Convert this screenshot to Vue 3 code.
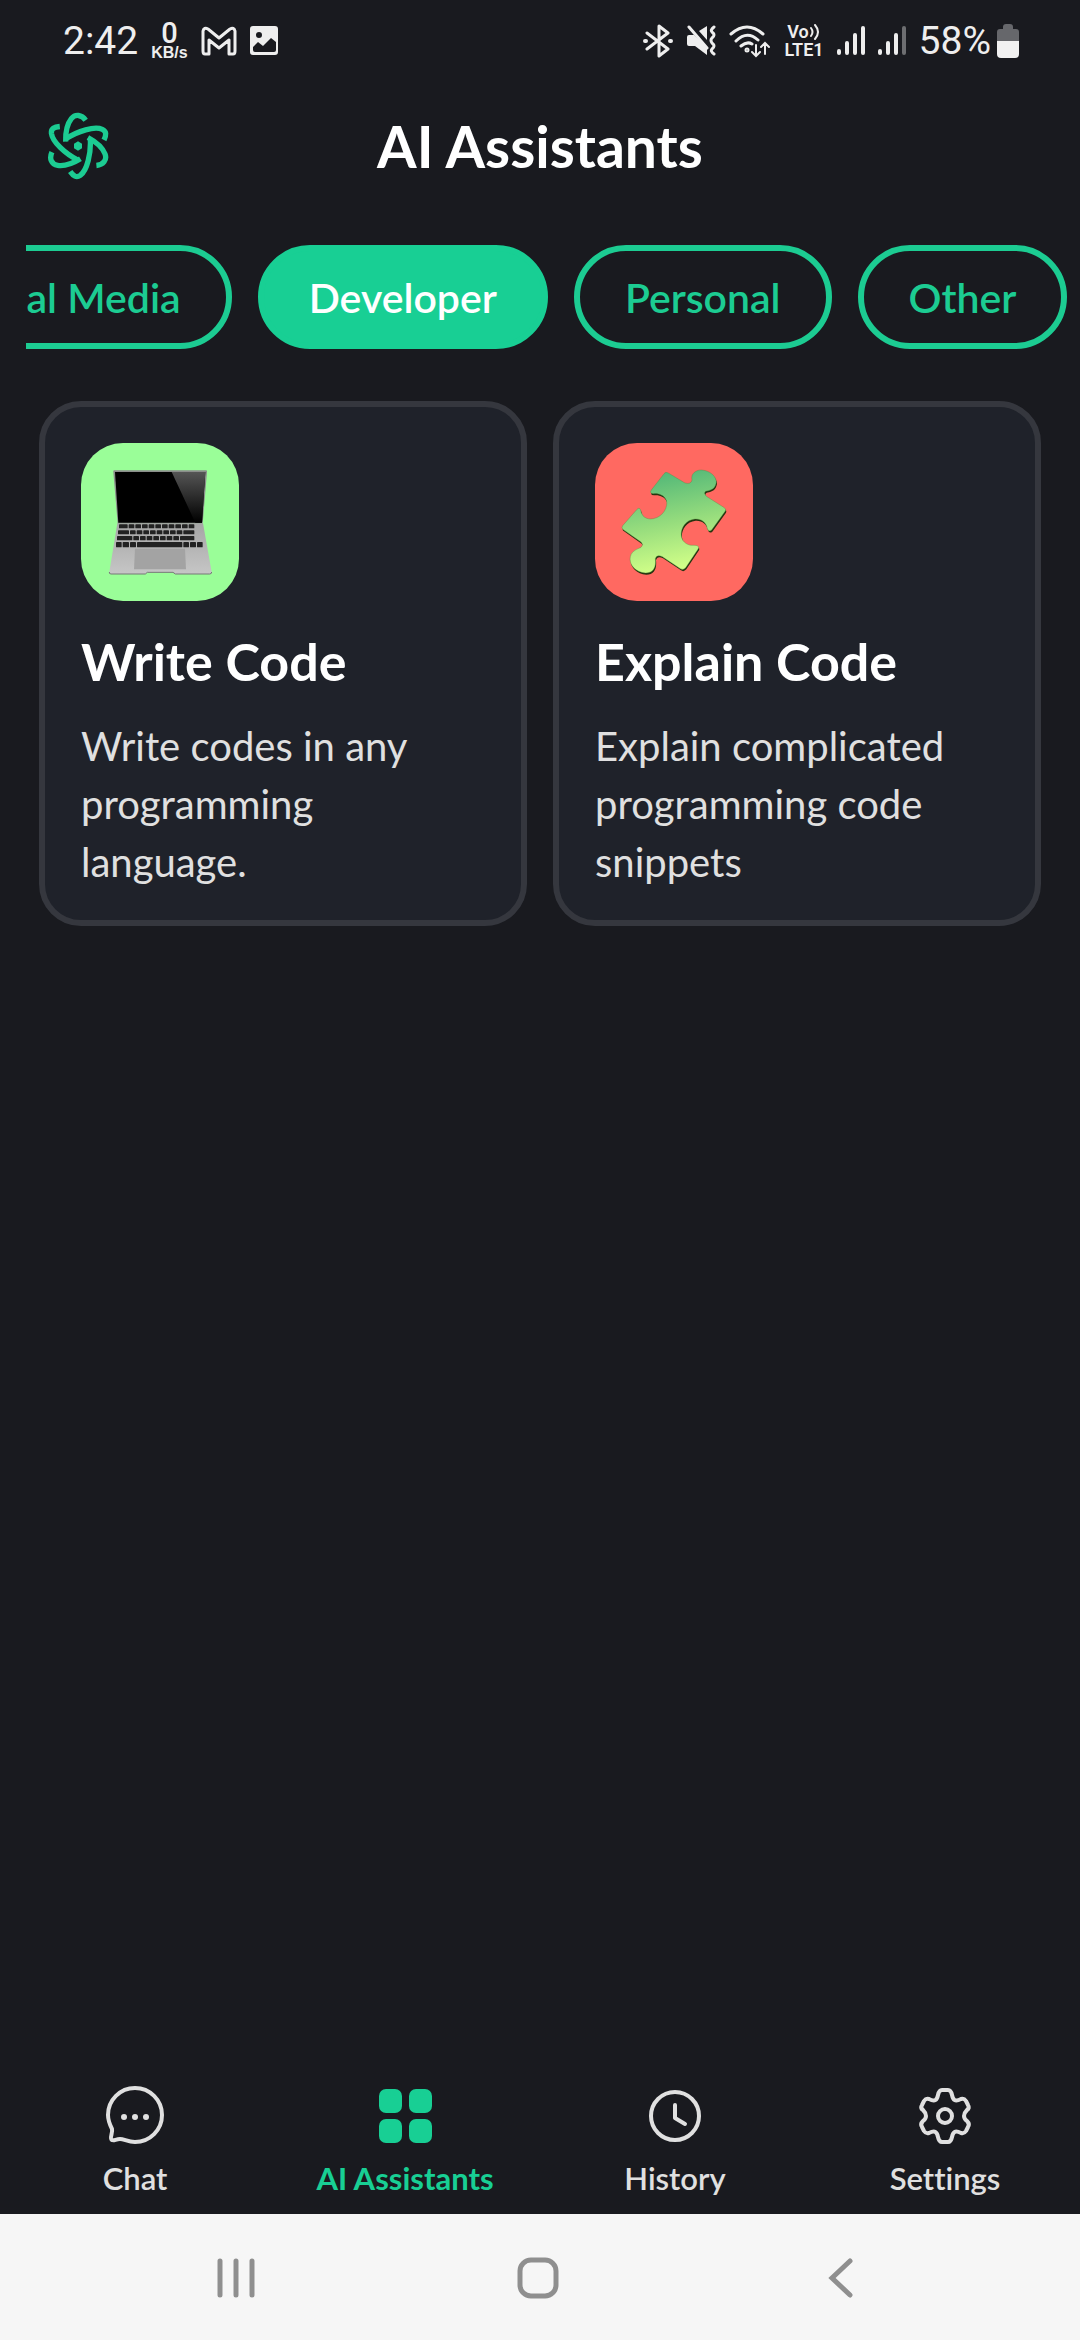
<script setup>
import { nextTick, onMounted, ref } from 'vue'

const categories = ['Social Media', 'Developer', 'Personal', 'Other']
const selected = ref('Developer')
const strip = ref(null)

const assistants = [
  { art: 'laptop', title: 'Write Code', text: 'Write codes in any programming language.' },
  { art: 'puzzle', title: 'Explain Code', text: 'Explain complicated programming code snippets' }
]

const tabs = [
  { id: 'chat', label: 'Chat' },
  { id: 'grid', label: 'AI Assistants' },
  { id: 'history', label: 'History' },
  { id: 'settings', label: 'Settings' }
]
const activeTab = ref('grid')

// Keyboard rows: x start, y, key height, key widths
const keyRows = [
  { x: 147, y: 283, h: 12, keys: [26, 17, 17, 17, 17, 17, 17, 17, 17, 17, 17] },
  { x: 144, y: 301, h: 12, keys: [33, 17, 17, 17, 17, 17, 17, 17, 17, 33] },
  { x: 141, y: 318, h: 13, keys: [46, 17, 17, 17, 17, 17, 17, 17, 43] },
  { x: 138, y: 336, h: 16, keys: [17, 19, 18, 136, 17, 18, 17] }
]
const keys = keyRows.flatMap((row) => {
  let x = row.x
  return row.keys.map((w) => {
    const key = { x, y: row.y, w, h: row.h }
    x += w + 3
    return key
  })
})

onMounted(async () => {
  await nextTick()
  strip.value.scrollLeft = strip.value.scrollWidth
})
</script>

<template>
  <div class="screen">
    <div class="status">
      <div class="status-side">
        <span class="clock">2:42</span>
        <span class="speed"><b>0</b><small>KB/s</small></span>
        <svg width="36" height="30" viewBox="0 0 36 30" fill="none" stroke="#eee" stroke-width="3" stroke-linejoin="round">
          <path d="M2 5 V25 Q2 28 4 28 H8 V14 L18 22 L28 14 V28 H32 Q34 28 34 25 V5 Q33 1 29 3 L18 12 L7 3 Q3 1 2 5 Z" />
        </svg>
        <svg width="30" height="30" viewBox="1 0 30 30" fill="#eee" fill-rule="evenodd">
          <path d="M4 0 H26 Q29 0 29 3 V26 Q29 29 26 29 H4 Q1 29 1 26 V3 Q1 0 4 0 Z M4 21 L9 16 L14 20 L22 12 L27 16 V24 Q27 26 25 26 H6 Q4 26 4 24 Z M10 6 A3 3 0 1 0 10 12 A3 3 0 1 0 10 6 Z" />
        </svg>
      </div>
      <div class="status-side">
        <svg width="30" height="34" viewBox="0 0 30 34" fill="none" stroke="#eee" stroke-width="3" stroke-linecap="round" stroke-linejoin="round">
          <path d="M4 9 L25 25 L16 32 V2 L25 9 L4 25" /><path d="M2 17 H3 M27 17 H28" stroke-width="4" />
        </svg>
        <svg width="30" height="32" viewBox="0 0 30 32">
          <path d="M1 12 Q1 10 3 10 H8 L21 23 V30 L9 21 H3 Q1 21 1 19 Z M13 6 L21 1 V15 Z" fill="#eee" />
          <path d="M3 2 L21 23" stroke="#eee" stroke-width="3" stroke-linecap="round" />
          <path d="M28 2 Q24 5 26 7 Q30 10 26 13 Q24 15 26 18 Q30 21 26 24 Q24 26 28 29" stroke="#eee" stroke-width="3" stroke-linecap="round" fill="none" />
        </svg>
        <svg width="42" height="34" viewBox="0 0 42 34" fill="none" stroke="#eee" stroke-width="3" stroke-linecap="round">
          <path d="M2 10 Q18 -4 34 10 M7 17 Q18 6 29 16 M12 22 Q18 17 23 20" />
          <circle cx="18" cy="26" r="1" />
          <path d="M27 21 V31 M23 28 L27 32 L31 28 M36 30 V20 M32 23 L36 19 L40 23" stroke-width="2" />
        </svg>
        <span class="volte">
          <span>Vo<svg width="12" height="18" viewBox="0 0 12 18" fill="none" stroke="#eee" stroke-width="2" stroke-linecap="round"><path d="M2 5 Q5 9 2 13 M6 2 Q12 9 6 16" /></svg></span>
          <span>LTE1</span>
        </span>
        <svg width="28" height="30" viewBox="0 0 28 30" stroke="#eee" stroke-width="4" stroke-linecap="round">
          <path d="M2 25 V27 M10 17 V27 M18 9 V27 M26 2 V27" />
        </svg>
        <svg width="28" height="30" viewBox="0 0 28 30" stroke="#eee" stroke-width="4" stroke-linecap="round">
          <path d="M2 25 V27 M10 17 V27 M18 9 V27" /><path d="M26 2 V27" stroke="#6d6e71" />
        </svg>
        <span class="battery">
          <span class="clock">58%</span>
          <svg width="22" height="34" viewBox="0 0 22 34">
            <path d="M6 5 V3 Q6 0 9 0 H13 Q16 0 16 3 V5 H19 Q22 5 22 8 V18 H0 V8 Q0 5 3 5 Z" fill="#66676b" />
            <path d="M0 17 H22 V30 Q22 34 18 34 H4 Q0 34 0 30 Z" fill="#f1f1f1" />
          </svg>
        </span>
      </div>
    </div>

    <header class="header">
      <svg width="62" height="68" viewBox="-93 -102 186 204" fill="none" stroke="#1ccc92" stroke-width="16" stroke-linejoin="round">
        <g v-for="turn in [0, 120, 240]" :key="turn" :transform="`rotate(${turn})`">
          <path d="M23 -77 C11 -94 -8 -97 -20 -82 C-31 -68 -38 -44 -37 -13" />
          <path d="M-39 -20 C0 -46 50 -60 73 -50 C86 -44 85 -33 78 -18" />
        </g>
        <path d="M0 -14 L12 -7 V7 L0 14 L-12 7 V-7 Z" fill="#1ccc92" stroke="none" />
      </svg>
      <h1>AI Assistants</h1>
    </header>

    <div ref="strip" class="chips">
      <button
        v-for="name in categories"
        :key="name"
        type="button"
        class="chip"
        :class="{ on: name === selected }"
        :aria-pressed="name === selected"
        @click="selected = name"
      >{{ name }}</button>
    </div>

    <main class="cards">
      <article v-for="item in assistants" :key="item.title" class="card">
        <div class="tile" :class="item.art">
          <svg v-if="item.art === 'laptop'" viewBox="33 39 474 474">
            <defs>
              <linearGradient id="glare" x1="0" y1="0" x2="0" y2="1">
                <stop offset="0" stop-color="#555" /><stop offset="1" stop-color="#000" />
              </linearGradient>
              <linearGradient id="deck" x1="0" y1="0" x2="0" y2="1">
                <stop offset="0" stop-color="#a5a5a5" /><stop offset="1" stop-color="#c6c6c6" />
              </linearGradient>
            </defs>
            <path d="M133 121 H408 Q412 121 411 126 L398 281 H143 L130 126 Q129 121 133 121 Z" fill="#8b8e8b" />
            <path d="M135 126 H406 L396 278 H145 Z" fill="#000" />
            <path d="M305 126 H406 L396 278 H376 Z" fill="url(#glare)" />
            <path d="M142 280 H399 L425 426 Q425 432 419 432 H316 L309 427 H232 L226 432 H123 Q117 432 118 426 Z" fill="url(#deck)" />
            <path d="M118 426 Q117 432 123 432 H226 L232 427 H309 L316 432 H419 Q425 432 425 426" fill="none" stroke="#777" stroke-width="3" />
            <path d="M195 356 H345 L348 418 H192 Z" fill="#a3a3a3" />
            <rect v-for="(k, i) in keys" :key="i" :x="k.x" :y="k.y" :width="k.w" :height="k.h" rx="2" fill="#222" />
          </svg>
          <svg v-else viewBox="30 39 474 474">
            <defs>
              <linearGradient id="leaf" x1="0.4" y1="0" x2="0.6" y2="1">
                <stop offset="0" stop-color="#50b678" /><stop offset="0.5" stop-color="#95dc7d" /><stop offset="0.95" stop-color="#d2ff88" />
              </linearGradient>
              <path id="piece" d="M250 129 L300 159 Q318 164 321 150 C316 130 335 119 350 120 C380 122 398 145 393 161 C389 180 372 181 362 184 Q354 191 366 200 L418 233 Q424 238 421 243 L380 300 Q371 307 367 296 C364 278 350 266 330 267 C300 270 286 298 289 318 C292 338 310 347 325 346 Q345 345 340 356 L302 413 Q294 422 286 416 L232 380 Q215 372 211 386 C214 412 205 429 182 429 C150 427 131 402 136 380 C140 362 158 357 168 352 Q177 345 168 336 L115 299 Q108 294 113 287 L155 239 Q163 230 167 240 C170 258 182 270 205 266 C235 260 250 230 244 211 C238 195 220 189 205 191 Q192 190 199 180 L237 131 Q242 124 250 129 Z" />
            </defs>
            <use href="#piece" y="5" x="2" fill="#26330f" />
            <use href="#piece" fill="url(#leaf)" stroke="#4c8a3c" stroke-opacity="0.5" stroke-width="2" />
          </svg>
        </div>
        <h2>{{ item.title }}</h2>
        <p>{{ item.text }}</p>
      </article>
    </main>

    <nav class="tabs">
      <button
        v-for="tab in tabs"
        :key="tab.id"
        type="button"
        class="tab"
        :class="{ on: tab.id === activeTab }"
        @click="activeTab = tab.id"
      >
        <svg width="64" height="64" viewBox="0 0 64 64" fill="none" stroke="currentColor" stroke-width="4" stroke-linecap="round" stroke-linejoin="round">
          <template v-if="tab.id === 'chat'">
            <path d="M9 45 C5 37 5 32 5 31 A27 27 0 1 1 32 58 C25 58 21 55 17 55 C13 55 11 57 9 56 C6 55 10 49 9 45 Z" />
            <path d="M21 33 H21.01 M32 33 H32.01 M43 33 H43.01" stroke-width="6" />
          </template>
          <template v-else-if="tab.id === 'grid'">
            <g fill="currentColor" stroke="none">
              <rect x="6" y="5" width="23" height="24" rx="7" /><rect x="36" y="5" width="23" height="24" rx="7" />
              <rect x="6" y="35" width="23" height="24" rx="7" /><rect x="36" y="35" width="23" height="24" rx="7" />
            </g>
          </template>
          <template v-else-if="tab.id === 'history'">
            <circle cx="32" cy="32" r="24" /><path d="M32 21 V34 L42 40" />
          </template>
          <template v-else>
            <circle cx="32" cy="32" r="7" />
            <path d="M25 11 Q26 6 29 6 H35 Q38 6 39 11 C40 16 42 18 48 15 Q51 14 53 17 L55 21 Q57 24 54 26 C50 30 50 34 54 37 Q57 40 55 43 L53 47 Q51 50 48 49 C42 46 40 48 39 53 Q38 58 35 58 H29 Q26 58 25 53 C24 48 22 46 16 49 Q13 50 11 47 L9 43 Q7 40 10 37 C14 34 14 30 10 26 Q7 24 9 21 L11 17 Q13 14 16 15 C22 18 24 16 25 11 Z" />
          </template>
        </svg>
        <span>{{ tab.label }}</span>
      </button>
    </nav>

    <div class="system">
      <button type="button" aria-label="Recent apps">
        <svg width="44" height="44" viewBox="0 0 44 44" stroke="#8f8f8f" stroke-width="5" stroke-linecap="round"><path d="M6 6 V40 M22 6 V40 M38 6 V40" /></svg>
      </button>
      <button type="button" aria-label="Home">
        <svg width="44" height="44" viewBox="0 0 44 44" fill="none" stroke="#8f8f8f" stroke-width="5"><rect x="4" y="5" width="36" height="36" rx="11" /></svg>
      </button>
      <button type="button" aria-label="Back">
        <svg width="44" height="44" viewBox="0 0 44 44" fill="none" stroke="#8f8f8f" stroke-width="5" stroke-linecap="round"><path d="M32 6 L14 23 L32 40" /></svg>
      </button>
    </div>
  </div>
</template>

<style>
body {
  background: #191a1f;
}
</style>

<style scoped>
.screen {
  display: flex;
  flex-direction: column;
  min-height: 100vh;
  background: #191a1f;
  color: #fff;
  font-family: Lato, "Open Sans", sans-serif;
  font-variant-ligatures: none;
}
button {
  margin: 0;
  padding: 0;
  border: 0;
  background: none;
  color: inherit;
  font: inherit;
  font-variant-ligatures: none;
}
svg {
  display: block;
  flex: none;
}
.status {
  display: flex;
  justify-content: space-between;
  height: 82px;
  padding: 0 61px 0 63px;
  color: #eee;
  font-family: Roboto, sans-serif;
}
.status-side {
  display: flex;
  align-items: center;
  gap: 13px;
}
.clock {
  font-size: 39px;
  line-height: 46px;
}
.speed {
  display: flex;
  flex-direction: column;
  align-items: center;
}
.speed b {
  font-size: 29px;
  font-weight: 500;
  line-height: 24px;
}
.speed small {
  font: 700 16px/16px "Liberation Sans", sans-serif;
}
.volte {
  display: flex;
  flex-direction: column;
  align-items: center;
  font-size: 18px;
  font-weight: 600;
  line-height: 18px;
}
.volte > span {
  display: flex;
}
.battery {
  display: flex;
  align-items: center;
  gap: 6px;
}
.header {
  display: grid;
  grid-template-columns: 1fr auto 1fr;
  align-items: center;
  height: 128px;
  padding: 0 47px;
}
h1 {
  margin: 0;
  font-size: 57px;
  font-weight: 700;
  line-height: 68px;
}
.chips {
  display: flex;
  gap: 26px;
  margin: 35px 0 52px 26px;
  padding-right: 13px;
  overflow-x: auto;
  scrollbar-width: none;
}
.chip {
  flex: none;
  height: 104px;
  padding: 0 45px;
  border: 6px solid #1ccc92;
  border-radius: 52px;
  color: #1ccc92;
  font-size: 41px;
  font-weight: 600;
}
.chip.on {
  background: #18cf94;
  border-color: #18cf94;
  color: #fff;
}
.cards {
  display: grid;
  grid-template-columns: 1fr 1fr;
  gap: 26px;
  padding: 0 39px;
}
.card {
  padding: 36px;
  border: 6px solid #35373e;
  border-radius: 42px;
  background: #1f222a;
}
.tile {
  width: 158px;
  height: 158px;
  border-radius: 42px;
}
.tile.laptop {
  background: #9afe98;
}
.tile.puzzle {
  background: #ff6961;
}
h2 {
  margin: 28px 0 24px;
  font-size: 52px;
  font-weight: 700;
  line-height: 64px;
}
p {
  height: 167px;
  margin: 0;
  overflow: hidden;
  color: #e0e0e0;
  font-size: 40px;
  line-height: 58px;
}
.tabs {
  display: grid;
  grid-template-columns: repeat(4, 1fr);
  margin-top: auto;
  padding-bottom: 17px;
}
.tab {
  display: flex;
  flex-direction: column;
  align-items: center;
  gap: 11px;
  color: #e0e0e0;
  font-size: 31px;
  font-weight: 600;
  line-height: 38px;
}
.tab.on {
  color: #18cf94;
  font-weight: 700;
}
.system {
  display: grid;
  grid-template-columns: repeat(3, 1fr);
  height: 126px;
  padding: 0 89px 0 85px;
  background: #f6f6f6;
}
.system button {
  display: flex;
  align-items: center;
  justify-content: center;
}
</style>
